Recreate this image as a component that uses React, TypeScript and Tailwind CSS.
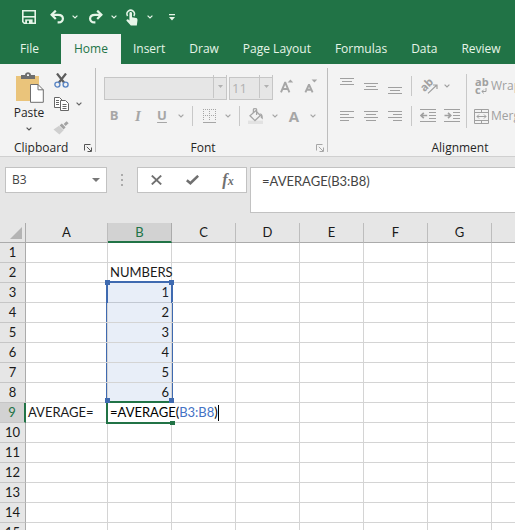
import type { ReactNode } from 'react'
import clsx from 'clsx'

const TABS = ['File', 'Home', 'Insert', 'Draw', 'Page Layout', 'Formulas', 'Data', 'Review']

const COLUMNS = ['A', 'B', 'C', 'D', 'E', 'F', 'G', 'H']

const ROWS = Array.from({ length: 15 }, (_, i) => i + 1)

const CELLS: Record<string, string> = {
  B2: 'NUMBERS',
  B3: '1',
  B4: '2',
  B5: '3',
  B6: '4',
  B7: '5',
  B8: '6',
  A9: 'AVERAGE=',
}

function Caret({ className }: { className?: string }) {
  return (
    <svg className={className} width="6" height="4" viewBox="0 0 6 4" fill="none" stroke="currentColor" strokeWidth="1.2">
      <path d="M0.6 0.6 3 3 5.4 0.6" />
    </svg>
  )
}

function MenuButton({ label, className }: { label: string; className?: string }) {
  return (
    <button aria-label={label} className={clsx('flex h-6 items-center justify-center', className ?? 'w-3.5')}>
      <Caret />
    </button>
  )
}

function IconButton({ label, children }: { label: string; children: ReactNode }) {
  return (
    <button aria-label={label} className="flex h-6 w-6 shrink-0 items-center justify-center">
      {children}
    </button>
  )
}

function Separator() {
  return <div className="mx-1 h-5 w-px shrink-0 bg-[#c8c8c8]" />
}

function Launcher({ label, className }: { label: string; className?: string }) {
  return (
    <button aria-label={label} className={className}>
      <svg width="8" height="8" viewBox="0 0 8 8" fill="none" stroke="currentColor">
        <path d="M0.5 6.5V0.5H6.5" />
        <path d="M2.8 2.8 7 7M7.5 3.5V7.5H3.5" />
      </svg>
    </button>
  )
}

// Horizontal strokes given as [x, width]
function Lines({ rows, pitch = 3 }: { rows: [number, number][]; pitch?: number }) {
  return (
    <svg width="14" height={(rows.length - 1) * pitch + 1} fill="currentColor" shapeRendering="crispEdges">
      {rows.map(([x, w], i) => (
        <rect key={i} x={x} y={i * pitch} width={w} height="1" />
      ))}
    </svg>
  )
}

function IndentIcon({ increase }: { increase?: boolean }) {
  return (
    <svg width="16" height="14" viewBox="0 0 16 14" fill="none" stroke="currentColor">
      <path d="M0 0.5H16M9 3.5H16M9 6.5H16M9 9.5H16M0 12.5H16" />
      {increase ? (
        <path d="M0.5 6.5H6.5M4 3.8 6.8 6.5 4 9.2" strokeWidth="1.6" />
      ) : (
        <path d="M1.2 6.5H7.2M3.8 3.8 1 6.5 3.8 9.2" strokeWidth="1.6" />
      )}
    </svg>
  )
}

function QuickAccess() {
  return (
    <div className="flex h-[34px] items-center pl-[17px] text-[#e6f5e8]">
      <IconButton label="Save">
        <svg width="14" height="14" viewBox="0 0 14 14" fill="none" stroke="currentColor" strokeWidth="1.6">
          <path d="M0.8 0.8H13.2V13.2H2.3L0.8 11.7Z" />
          <path d="M1 6.8H13" />
          <path d="M3.2 13.2V9.4H10.6V13.2Z" fill="currentColor" stroke="none" />
          <path d="M5 10.8H7V13.2H5Z" fill="#217346" stroke="none" />
        </svg>
      </IconButton>
      <div className="ml-1 flex">
        <IconButton label="Undo">
          <svg width="14" height="14" viewBox="0 0 14 14" fill="none" stroke="currentColor" strokeWidth="2.2">
            <path d="M1.4 4.8H8.2C14.4 4.8 14.4 12.4 8.6 12.4H7.6" />
            <path d="M5.8 0.6 1.6 4.8 5.8 9" />
          </svg>
        </IconButton>
        <MenuButton label="Undo history" className="w-3" />
      </div>
      <div className="ml-[3px] flex">
        <IconButton label="Redo">
          <svg width="14" height="14" viewBox="0 0 14 14" fill="none" stroke="currentColor" strokeWidth="2.2">
            <path d="M12.6 4.8H5.8C-0.4 4.8 -0.4 12.4 5.4 12.4H6.4" />
            <path d="M8.2 0.6 12.4 4.8 8.2 9" />
          </svg>
        </IconButton>
        <MenuButton label="Redo history" className="w-3" />
      </div>
      <div className="flex">
        <IconButton label="Touch mode">
          <svg width="12" height="17" viewBox="0 0 12 17" fill="none">
            <path d="M1.6 7A3.7 3.7 0 1 1 7.8 7" stroke="currentColor" strokeWidth="1.5" />
            <path
              d="M3.4 4.3C3.4 2.7 6 2.7 6 4.3V8.2L10.2 9.1C11.2 9.4 11.6 10.2 11.5 11.2L10.8 16.6H4.8L0.5 11.8C0.1 10.8 1.4 9.8 2.3 10.5L3.4 11.4Z"
              fill="currentColor"
            />
          </svg>
        </IconButton>
        <MenuButton label="Touch mode options" className="w-3" />
      </div>
      <div className="ml-1">
        <IconButton label="Customize Quick Access Toolbar">
          <svg width="6" height="7" viewBox="0 0 6 7" fill="currentColor">
            <path d="M0 0H6V1.2H0ZM0 3H6L3 6.4Z" />
          </svg>
        </IconButton>
      </div>
    </div>
  )
}

function ClipboardGroup() {
  return (
    <section className="flex w-[95px] shrink-0 flex-col justify-between text-[#262626]">
      <div className="flex pl-[14px] pt-1">
        <button className="flex w-[30px] flex-col items-center pt-1">
          <svg width="30" height="31" viewBox="0 0 30 31" fill="none">
            <path d="M2 4H25V29H2Z" fill="#eac47b" />
            <path d="M7 7V3H11C11 -0.6 17 -0.6 17 3H21V7Z" fill="#6e6e6e" />
            <path d="M13 2.2H15V4H13Z" fill="#f3f3f3" />
            <path d="M16.5 12.5H24L29.3 17.8V30.3H16.5Z" fill="#fff" stroke="#6e6e6e" />
            <path d="M24 12.5V17.8H29.3" stroke="#6e6e6e" />
          </svg>
          <span className="text-[12px] leading-5">Paste</span>
          <Caret className="mt-1 text-[#555]" />
        </button>
        <div className="ml-[5px] flex flex-col text-[#666]">
          <IconButton label="Cut">
            <svg width="15" height="15" viewBox="0 0 15 15" fill="none">
              <path d="M3 0.5 10.4 10M12 0.5 4.6 10" stroke="#5c5c5c" strokeWidth="2.2" />
              <circle cx="3.4" cy="11.6" r="2.5" stroke="#5b86c4" strokeWidth="1.4" />
              <circle cx="11.6" cy="11.6" r="2.5" stroke="#5b86c4" strokeWidth="1.4" />
            </svg>
          </IconButton>
          <div className="flex">
            <IconButton label="Copy">
              <svg width="15" height="14" viewBox="0 0 15 14" fill="#fff" stroke="currentColor">
                <path d="M0.5 0.5H5.5L8.5 3.5V10.5H0.5Z" />
                <path d="M2 3.5H5M2 5.5H5M2 7.5H5" />
                <path d="M6.5 3.5H11.5L14.5 6.5V13.5H6.5Z" />
                <path d="M8.5 7.5H12.5M8.5 9.5H12.5M8.5 11.5H12.5" />
              </svg>
            </IconButton>
            <MenuButton label="Copy options" className="w-3" />
          </div>
          <IconButton label="Format Painter">
            <svg width="16" height="14" viewBox="0 0 16 14">
              <path d="M0.5 8.5 6 4.8 10.6 9.2 6.4 13.6Z" fill="#cfcfcf" />
              <path d="M6.6 4.4 8.8 2.4 12.6 6.2 10.6 8.4Z" fill="#a3a3a3" />
              <path d="M10.6 3 13.6 0.2 15.6 2.2 12.6 5Z" fill="#a3a3a3" />
            </svg>
          </IconButton>
        </div>
      </div>
      <div className="flex h-4 items-center justify-between pl-[14px] pr-[3px]">
        <span className="text-[12px] leading-4">Clipboard</span>
        <Launcher label="Clipboard settings" className="text-[#555]" />
      </div>
    </section>
  )
}

function FontGroup() {
  return (
    <section className="flex w-[231px] shrink-0 flex-col justify-between text-[#a6a6a6]">
      <div className="flex flex-col gap-1.5 pl-1.5 pt-2.5">
        <div className="flex h-6 items-center">
          <FontSelect label="Font name" value="" className="ml-0.5 w-[123px]" />
          <FontSelect label="Font size" value="11" className="ml-0.5 w-11" />
          <button aria-label="Increase font size" className="ml-0.5 flex h-6 w-6 items-center justify-center">
            <svg width="14" height="14" viewBox="0 0 14 14" fill="none">
              <path d="M1 13.4 5 3.8H5.4L9.4 13.4M2.6 10H7.8" stroke="currentColor" strokeWidth="1.9" />
              <path d="M7.6 3.4 10.4 0.4 13.2 3.4Z" fill="currentColor" />
            </svg>
          </button>
          <button aria-label="Decrease font size" className="flex h-6 w-6 items-center justify-center">
            <svg width="14" height="14" viewBox="0 0 14 14" fill="none">
              <path d="M1.4 13.4 4.8 6H5.2L8.6 13.4M2.8 10.8H7.2" stroke="currentColor" strokeWidth="1.9" />
              <path d="M7.6 0.4H13.2L10.4 3.4Z" fill="currentColor" />
            </svg>
          </button>
        </div>
        <div className="flex h-6 items-center">
          <button className="h-6 w-6 text-[13px] font-bold">B</button>
          <button className="h-6 w-6 font-['Liberation_Serif',serif] text-[15px] font-bold italic">I</button>
          <button className="h-6 w-6 text-[13px] font-bold underline underline-offset-2">U</button>
          <MenuButton label="Underline options" />
          <Separator />
          <IconButton label="Borders">
            <svg width="13" height="14" viewBox="0 0 13 14" fill="none" stroke="currentColor">
              <path d="M0 0.5H13M0 6.5H13M0.5 0V12M6.5 0V12M12.5 0V12" strokeDasharray="1 1" />
              <path d="M0 13.5H13" />
            </svg>
          </IconButton>
          <MenuButton label="Border options" />
          <Separator />
          <IconButton label="Fill color">
            <svg width="16" height="16" viewBox="0 0 16 16" fill="none" stroke="currentColor" strokeWidth="1.3">
              <path d="M0 12.6H15V16H0Z" fill="#e2e2e2" stroke="none" />
              <path d="M7.6 2.8 12.4 7.6 7 12.6 2 7.8Z" />
              <path d="M5.4 5V1.4C5.4 0.4 8.6 0.4 8.6 1.4V7" />
              <path d="M11.6 5.6C14.4 5.6 15 7.4 14.8 11.4L12.6 9.6 13 7.6Z" fill="currentColor" stroke="none" />
            </svg>
          </IconButton>
          <MenuButton label="Fill color options" />
          <button aria-label="Font color" className="h-6 w-6 text-[15px] font-bold">A</button>
          <MenuButton label="Font color options" />
        </div>
      </div>
      <div className="flex h-4 items-center justify-end pr-[3px]">
        <span className="flex-1 pr-1.5 text-center text-[12px] leading-4 text-[#262626]">Font</span>
        <Launcher label="Font settings" />
      </div>
    </section>
  )
}

function FontSelect({ label, value, className }: { label: string; value: string; className: string }) {
  return (
    <div className={clsx('relative h-[23px]', className)}>
      <select
        aria-label={label}
        defaultValue={value}
        className="h-full w-full appearance-none border border-[#c6c6c6] bg-[#e6e6e6] pl-0.5 text-[13px] text-[#b1b1b1]"
      >
        <option value={value}>{value}</option>
      </select>
      <span className="pointer-events-none absolute inset-y-0 right-0 flex w-3.5 items-center justify-center border-x border-[#c6c6c6]">
        <svg width="5" height="3" viewBox="0 0 5 3" fill="#b1b1b1">
          <path d="M0 0H5L2.5 3Z" />
        </svg>
      </span>
    </div>
  )
}

function AlignmentGroup() {
  return (
    <section className="flex w-[264px] shrink-0 flex-col justify-between text-[#a0a0a0]">
      <div className="flex pl-[7px] pt-2.5">
        <div className="flex flex-col gap-1.5">
          <div className="flex h-6 items-center">
            <button aria-label="Top align" className="flex h-6 w-6 items-start justify-center pt-1">
              <Lines rows={[[0, 14], [2, 10], [0, 14]]} />
            </button>
            <button aria-label="Middle align" className="flex h-6 w-6 items-center justify-center">
              <Lines rows={[[0, 14], [2, 10], [0, 14]]} />
            </button>
            <button aria-label="Bottom align" className="flex h-6 w-6 items-end justify-center pb-1">
              <Lines rows={[[0, 14], [2, 10], [0, 14]]} />
            </button>
            <Separator />
            <IconButton label="Orientation">
              <span className="relative flex h-4 w-4 items-center justify-center">
                <span className="-rotate-45 pb-1 text-[11px] leading-3 font-bold">ab</span>
                <svg className="absolute -right-0.5 bottom-0" width="11" height="10" viewBox="0 0 11 10" fill="none" stroke="currentColor" strokeWidth="1.2">
                  <path d="M1 9.4 9.6 1.2M6 1H10V5" />
                </svg>
              </span>
            </IconButton>
            <MenuButton label="Orientation options" />
          </div>
          <div className="flex h-6 items-center">
            <IconButton label="Align left">
              <Lines rows={[[0, 14], [0, 9], [0, 14], [0, 9]]} />
            </IconButton>
            <IconButton label="Center">
              <Lines rows={[[0, 14], [2, 10], [0, 14], [2, 10]]} />
            </IconButton>
            <IconButton label="Align right">
              <Lines rows={[[0, 14], [5, 9], [0, 14], [5, 9]]} />
            </IconButton>
            <Separator />
            <IconButton label="Decrease indent">
              <IndentIcon />
            </IconButton>
            <IconButton label="Increase indent">
              <IndentIcon increase />
            </IconButton>
          </div>
        </div>
        <div className="ml-0.5 w-px bg-[#c8c8c8]" />
        <div className="flex flex-col gap-1.5 pl-[7px] text-[12px]">
          <button className="flex h-6 items-center gap-0.5 whitespace-nowrap">
            <span className="flex w-[15px] flex-col items-start pl-px text-[11px] leading-2 font-bold">
              <span>ab</span>
              <span className="flex items-end">
                c
                <svg width="6" height="6" viewBox="0 0 6 6" fill="none" stroke="currentColor">
                  <path d="M5 0V3.5H1M2.8 1.6 0.9 3.5 2.8 5.4" />
                </svg>
              </span>
            </span>
            Wrap Text
          </button>
          <button className="flex h-6 items-center gap-0.5 whitespace-nowrap">
            <svg width="15" height="15" viewBox="0 0 15 15" fill="none" stroke="currentColor">
              <path d="M0.5 0.5H14.5V14.5H0.5ZM0 3.5H15M0 11.5H15M7.5 0V3M7.5 12V15" />
              <path d="M3 7.5H12M5 5.5 3 7.5 5 9.5M10 5.5 12 7.5 10 9.5" />
            </svg>
            Merge &amp; Center
          </button>
        </div>
      </div>
      <div className="flex h-4 items-center justify-center">
        <span className="text-[12px] leading-4 text-[#262626]">Alignment</span>
      </div>
    </section>
  )
}

function FormulaBar() {
  return (
    <div className="flex items-start bg-[#e6e6e6] py-2.5 pl-[5px] text-[#444]">
      <div className="flex h-[26px] w-[102px] shrink-0 items-center border border-[#c2c2c2] bg-white">
        <input
          aria-label="Name box"
          defaultValue="B3"
          className="min-w-0 flex-1 pl-1.5 text-[12px] outline-none"
        />
        <button aria-label="Defined names" className="flex w-5 justify-center">
          <svg width="8" height="4" viewBox="0 0 8 4" fill="#777">
            <path d="M0 0H8L4 4Z" />
          </svg>
        </button>
      </div>
      <div className="flex h-[26px] w-[30px] shrink-0 flex-col items-center justify-center gap-[3px]">
        <span className="h-0.5 w-0.5 bg-[#ababab]" />
        <span className="h-0.5 w-0.5 bg-[#ababab]" />
        <span className="h-0.5 w-0.5 bg-[#ababab]" />
      </div>
      <div className="flex h-[26px] w-[110px] shrink-0 items-center justify-between border border-[#c2c2c2] bg-white px-1.5 text-[#707070]">
        <IconButton label="Cancel">
          <svg width="11" height="10" viewBox="0 0 11 10" fill="none" stroke="currentColor" strokeWidth="1.9">
            <path d="M0.8 0.6 10.2 9.4M10.2 0.6 0.8 9.4" />
          </svg>
        </IconButton>
        <IconButton label="Enter">
          <svg width="13" height="10" viewBox="0 0 13 10" fill="none" stroke="currentColor" strokeWidth="2.6">
            <path d="M0.8 5.2 4.4 8.2 12.2 0.8" />
          </svg>
        </IconButton>
        <button
          aria-label="Insert function"
          className="h-6 w-6 font-['Liberation_Serif',serif] text-[16px] leading-5 font-bold italic"
        >
          f<span className="text-[12px]">x</span>
        </button>
      </div>
      <textarea
        aria-label="Formula bar"
        defaultValue="=AVERAGE(B3:B8)"
        className="ml-[3px] h-[46px] min-w-0 flex-1 resize-none border border-r-0 border-[#c2c2c2] bg-white py-1 pl-[11px] font-[Lato,sans-serif] text-[13px] leading-[18px] outline-none"
      />
    </div>
  )
}

function RangeHighlight() {
  return (
    <div className="pointer-events-none absolute -left-0.5 -top-0.5 h-[122px] w-[67px] border-2 border-[#3f6ab0] bg-[#4472c4]/12">
      <span className="absolute -left-[3px] -top-[3px] h-[5px] w-[5px] bg-[#3f6ab0]" />
      <span className="absolute -right-[3px] -top-[3px] h-[5px] w-[5px] bg-[#3f6ab0]" />
      <span className="absolute -bottom-0.5 -left-[3px] z-20 h-[5px] w-[5px] bg-[#3f6ab0]" />
      <span className="absolute -bottom-0.5 -right-[3px] z-20 h-[5px] w-[5px] bg-[#3f6ab0]" />
    </div>
  )
}

function CellEditor() {
  return (
    <div className="absolute left-0 top-0 z-10 flex h-[19px] items-center bg-white pl-0.5 text-black">
      <div className="pointer-events-none absolute -left-0.5 -top-0.5 h-[23px] w-[66px] border-y-2 border-l-2 border-[#217346]" />
      <span className="absolute -bottom-[3px] left-[62px] h-1 w-[5px] bg-[#217346]" />
      <span className="relative">
        =AVERAGE(<span className="text-[#4472c4]">B3:B8</span>)
      </span>
      <span className="h-4 w-px bg-black" />
    </div>
  )
}

function Sheet() {
  return (
    <table className="w-full min-w-[556px] table-fixed border-separate border-spacing-0 font-[Lato,sans-serif] text-[13px] leading-[19px] text-[#1a1a1a]">
      <colgroup>
        <col className="w-[26px]" />
        <col className="w-[82px]" />
        {COLUMNS.slice(1, -1).map(col => (
          <col key={col} className="w-16" />
        ))}
        <col />
      </colgroup>
      <thead>
        <tr className="h-5 bg-[#e6e6e6]">
          <th className="border-b border-r border-[#ababab] p-0">
            <svg className="ml-auto mr-[3px]" width="12" height="12" viewBox="0 0 12 12" fill="#b4b4b4">
              <path d="M12 0V12H0Z" />
            </svg>
          </th>
          {COLUMNS.map(col => (
            <th
              key={col}
              className={clsx(
                'p-0 font-normal',
                col === 'B'
                  ? 'border-b-2 border-r border-b-[#217346] border-r-[#ababab] bg-[#d2d2d2] leading-[18px] text-[#217346]'
                  : 'border-b border-r border-b-[#ababab] border-r-[#bdbdbd]',
              )}
            >
              {col}
            </th>
          ))}
        </tr>
      </thead>
      <tbody>
        {ROWS.map(row => (
          <tr key={row} className="h-5">
            <th
              className={clsx(
                'border-b border-r border-b-[#c6c6c6] p-0 font-normal',
                row === 9 ? 'border-r-2 border-r-[#217346] bg-[#d2d2d2] text-[#217346]' : 'border-r-[#ababab] bg-[#e6e6e6]',
              )}
            >
              {row}
            </th>
            {COLUMNS.map(col => {
              const id = `${col}${row}`
              const isNumber = /^\d+$/.test(CELLS[id] ?? '')
              return (
                <td
                  key={col}
                  className={clsx(
                    'relative whitespace-nowrap border-b border-r border-[#d4d4d4] p-0',
                    isNumber ? 'pr-0.5 text-right' : 'pl-0.5',
                  )}
                >
                  {CELLS[id]}
                  {id === 'B3' && <RangeHighlight />}
                  {id === 'B9' && <CellEditor />}
                </td>
              )
            })}
          </tr>
        ))}
      </tbody>
    </table>
  )
}

export default function App() {
  return (
    <div className="flex h-screen flex-col overflow-hidden bg-white font-['Open_Sans',sans-serif]">
      <header className="shrink-0 bg-[#217346]">
        <QuickAccess />
        <nav className="flex h-[30px] overflow-hidden">
          {TABS.map(tab => (
            <button
              key={tab}
              className={clsx(
                'shrink-0 text-[12px] first:pl-5 first:pr-[22px]',
                tab === 'Home' ? 'bg-[#f3f3f3] px-[13px] text-[#217346]' : 'px-3 text-[#e6f5e8]',
              )}
            >
              {tab}
            </button>
          ))}
        </nav>
      </header>
      <div className="flex h-[93px] shrink-0 overflow-hidden border-b border-[#d0d0d0] bg-[#f3f3f3]">
        <ClipboardGroup />
        <div className="mb-1 mt-1 w-px shrink-0 bg-[#bdbdbd]" />
        <FontGroup />
        <div className="mb-1 mt-1 w-px shrink-0 bg-[#bdbdbd]" />
        <AlignmentGroup />
      </div>
      <FormulaBar />
      <main className="min-h-0 flex-1 overflow-hidden">
        <Sheet />
      </main>
    </div>
  )
}
